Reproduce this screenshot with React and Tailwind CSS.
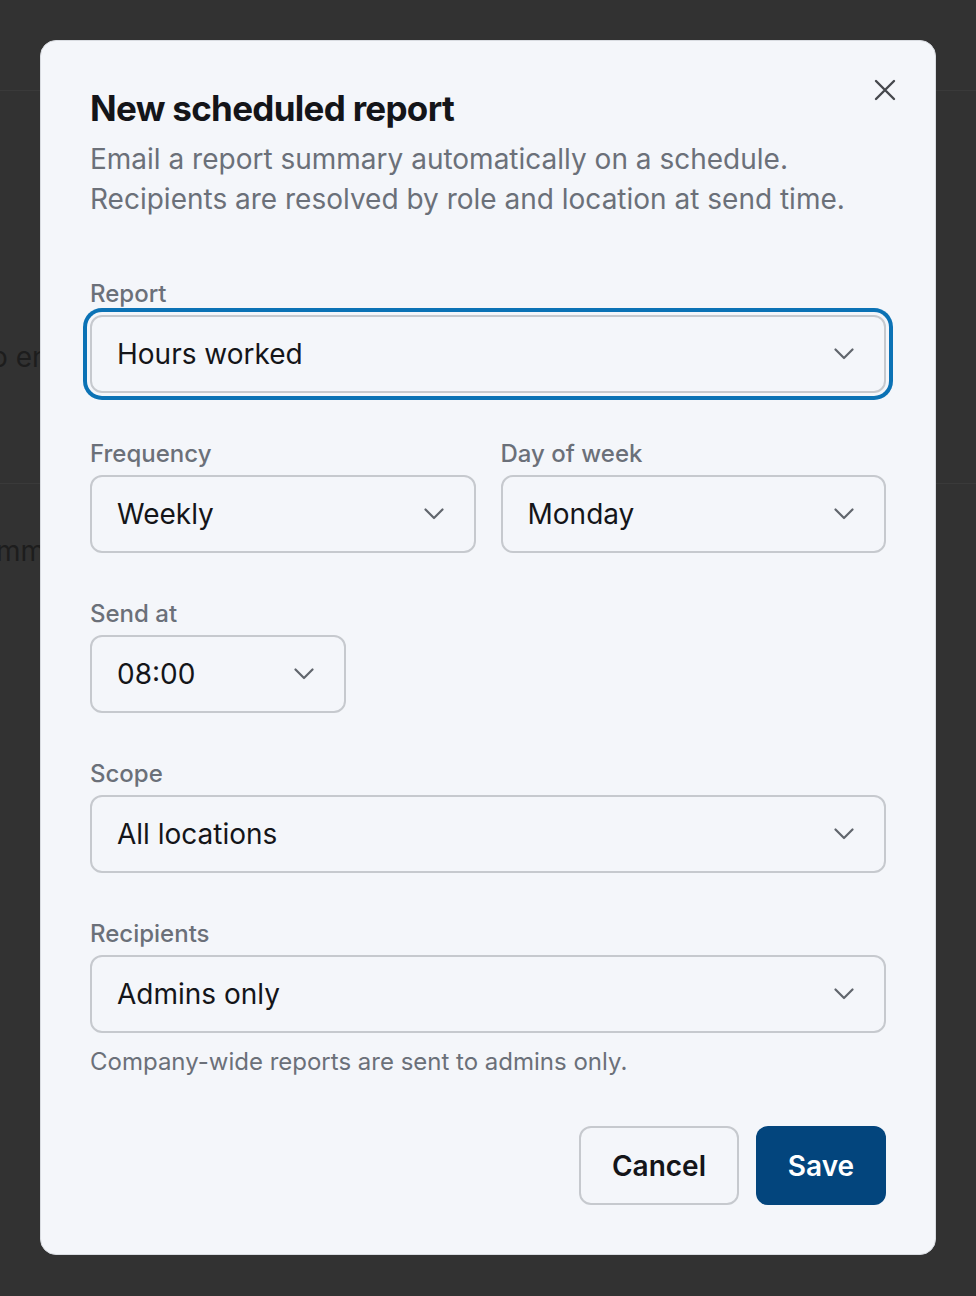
import React, { useState } from 'react';

function Chevron() {
  return (
    <svg width="20" height="12" viewBox="0 0 20 12" fill="none" className="text-[#61666d] shrink-0">
      <path d="M1.5 1.5 10 10l8.5-8.5" stroke="currentColor" strokeWidth="2.2" strokeLinecap="round" strokeLinejoin="round" />
    </svg>
  );
}

function SelectBox({ value, focused, className = '' }) {
  return (
    <button
      type="button"
      className={`flex h-[78px] items-center justify-between rounded-[12px] border-2 border-[#c6c9ce] bg-[#f4f6fa] pl-[25px] pr-[30px] text-left text-[28px] text-[#141519] ${
        focused ? 'ring-[4px] ring-[#0b72b5] ring-offset-[3px] ring-offset-[#f4f6fa]' : ''
      } ${className}`}
    >
      <span>{value}</span>
      <Chevron />
    </button>
  );
}

function Field({ label, children, className = '' }) {
  return (
    <div className={`flex flex-col ${className}`}>
      <label className="mb-[5px] h-[32px] text-[24px] leading-[32px] font-medium text-[#6b7079]">{label}</label>
      {children}
    </div>
  );
}

export default function App() {
  const [form] = useState({
    report: 'Hours worked',
    frequency: 'Weekly',
    day: 'Monday',
    time: '08:00',
    scope: 'All locations',
    recipients: 'Admins only',
  });

  return (
    <div className="relative min-h-[1296px] overflow-hidden bg-[#323232] p-[40px] font-['Inter','Liberation_Sans',sans-serif]">
      {/* page behind the overlay */}
      <div className="absolute inset-0 text-[28px] text-[#1d1d1d]">
        <div className="absolute left-0 right-0 top-[90px] h-px bg-[#3a3a3a]" />
        <div className="absolute left-[-9px] top-[336px]">o en</div>
        <div className="absolute left-0 right-0 top-[483px] h-px bg-[#3a3a3a]" />
        <div className="absolute left-[-4px] top-[530px]">mm</div>
      </div>

      <div className="relative flex flex-col rounded-[16px] border border-[#d9dce1] bg-[#f4f6fa] px-[49px] pt-[47px] pb-[49px]">
        <button type="button" className="absolute right-[37px] top-[36px] p-[2px] text-[#45484d]">
          <svg width="22" height="22" viewBox="0 0 22 22" fill="none">
            <path d="M2 2l18 18M20 2 2 20" stroke="currentColor" strokeWidth="2.4" strokeLinecap="round" />
          </svg>
        </button>

        <h2 className="text-[35px] leading-[40px] font-bold tracking-[-0.02em] text-[#141519]">New scheduled report</h2>
        <p className="mt-[11px] text-[28px] leading-[40px] text-[#6b7079]">
          Email a report summary automatically on a schedule.
          <br />
          Recipients are resolved by role and location at send time.
        </p>

        <Field label="Report" className="mt-[59px]">
          <SelectBox value={form.report} focused />
        </Field>

        <div className="mt-[45px] grid grid-cols-2 gap-[25px]">
          <Field label="Frequency">
            <SelectBox value={form.frequency} />
          </Field>
          <Field label="Day of week">
            <SelectBox value={form.day} />
          </Field>
        </div>

        <Field label="Send at" className="mt-[45px]">
          <SelectBox value={form.time} className="w-[256px]" />
        </Field>

        <Field label="Scope" className="mt-[45px]">
          <SelectBox value={form.scope} />
        </Field>

        <Field label="Recipients" className="mt-[45px]">
          <SelectBox value={form.recipients} />
        </Field>
        <p className="mt-[13px] text-[24px] leading-[32px] text-[#6b7079]">Company-wide reports are sent to admins only.</p>

        <div className="mt-[48px] flex justify-end gap-[17px]">
          <button type="button" className="h-[79px] w-[160px] rounded-[12px] border-2 border-[#c6c9ce] text-[28px] font-semibold text-[#141519]">
            Cancel
          </button>
          <button type="button" className="h-[79px] w-[130px] rounded-[12px] bg-[#03457d] text-[28px] font-semibold text-white">
            Save
          </button>
        </div>
      </div>
    </div>
  );
}
